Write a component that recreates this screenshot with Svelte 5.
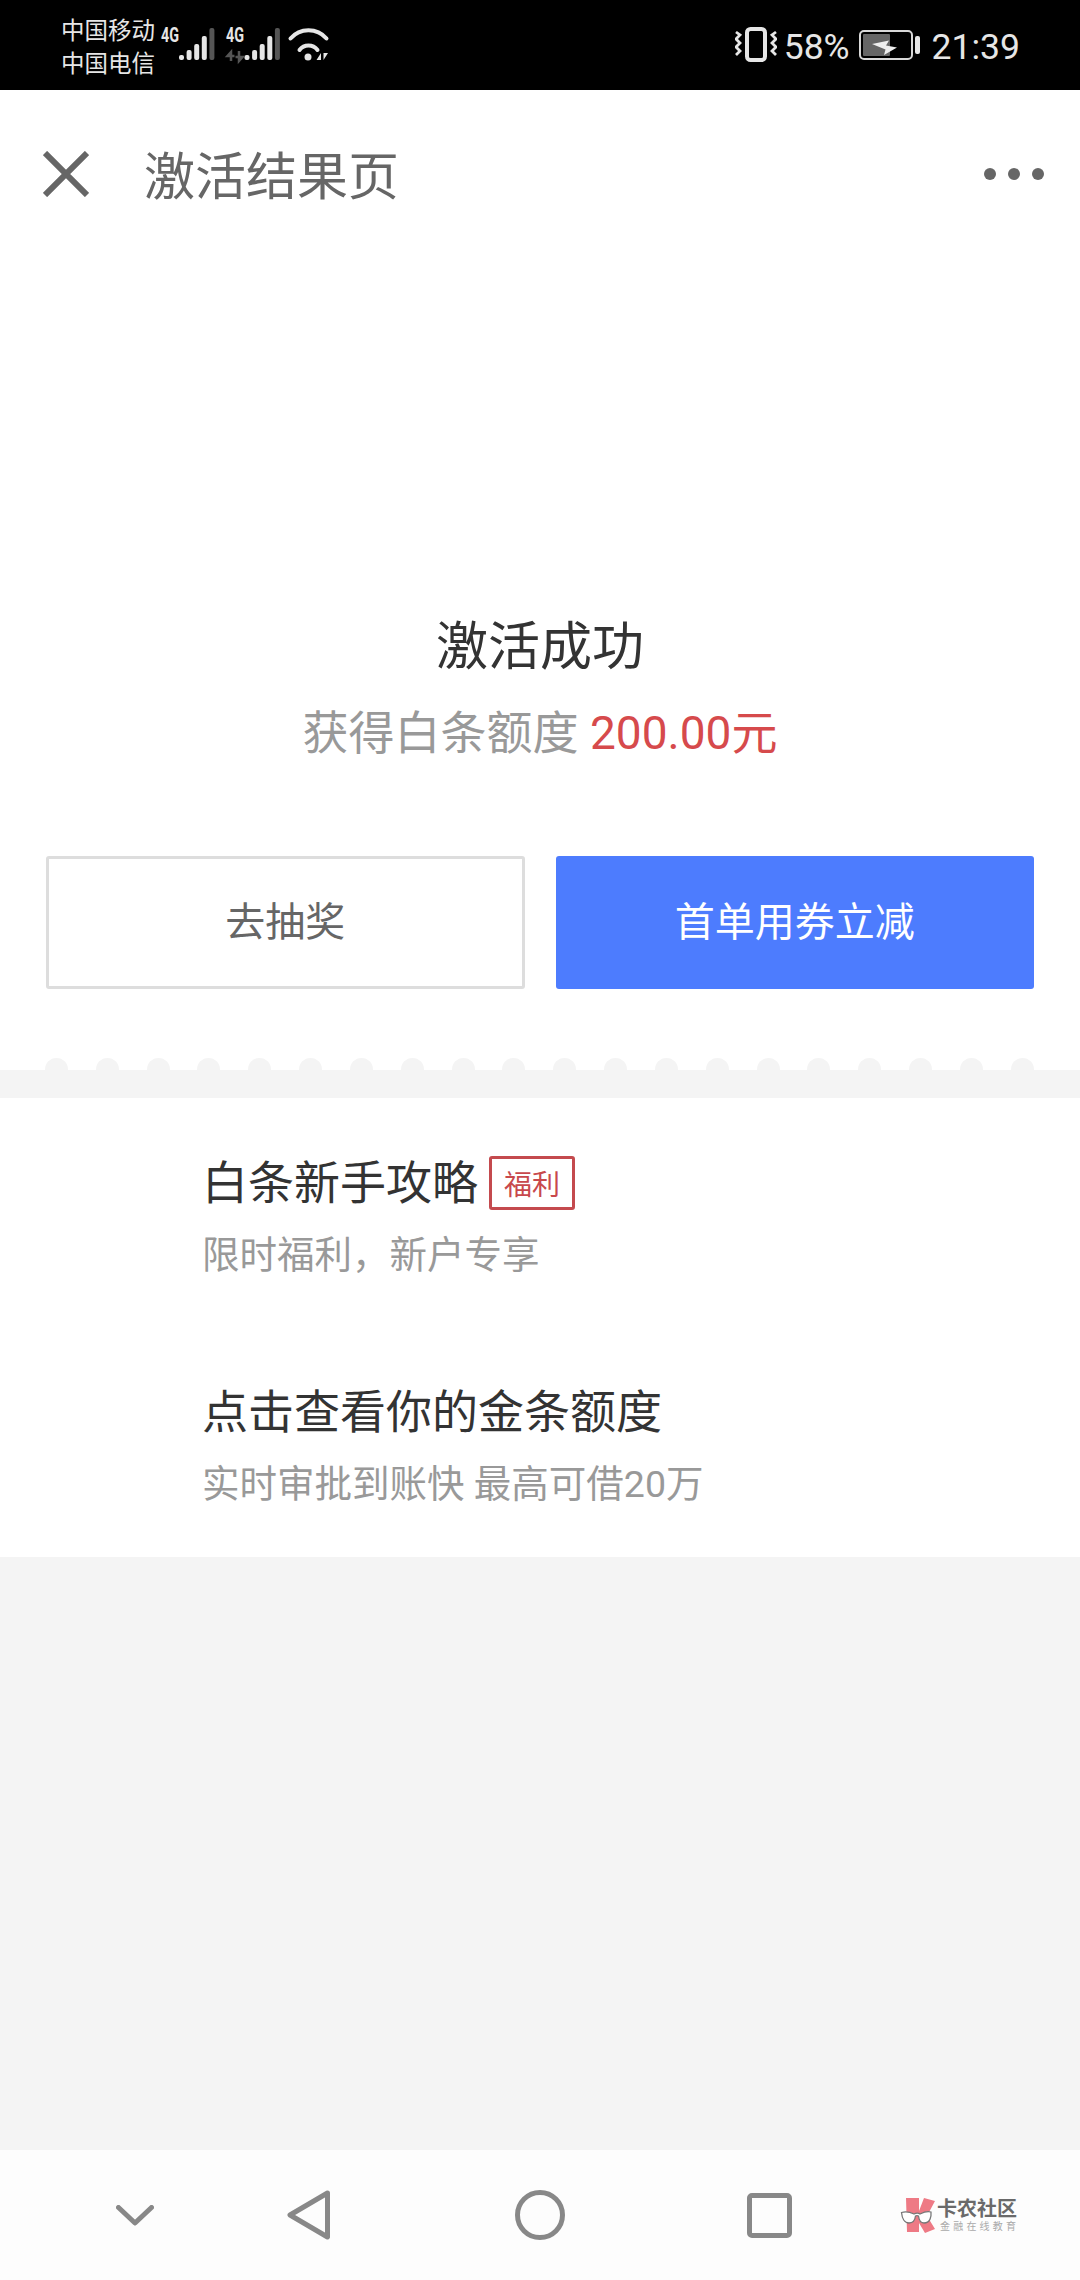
<script>
  // tutorial rows under the activation result
  const guides = [
    { title: "白条新手攻略", tag: "福利", desc: "限时福利，新户专享" },
    { title: "点击查看你的金条额度", tag: "", desc: "实时审批到账快 最高可借20万" },
  ];

  // the torn edge above the grey band
  const scallops = Array.from({ length: 20 }, (_, i) => i);

  // signal bars: distance from the left of the icon and top of the bar
  const bars = [
    { x: 0, top: 55, dim: false },
    { x: 7.6, top: 50, dim: false },
    { x: 15.2, top: 44, dim: false },
    { x: 22.8, top: 36, dim: false },
    { x: 30.4, top: 28, dim: true },
  ];
</script>

<div class="page">
  <div class="status">
    <div class="carriers">
      <span>中国移动</span>
      <span>中国电信</span>
    </div>
    <svg class="net" width="172" height="90" viewBox="160 0 172 90">
      <text x="162" y="42" textLength="18" lengthAdjust="spacingAndGlyphs" class="net-label">4G</text>
      <text x="227" y="42" textLength="18" lengthAdjust="spacingAndGlyphs" class="net-label">4G</text>
      {#each bars as bar}
        <rect x={180 + bar.x} y={bar.top} width="5" height={60 - bar.top} rx="2" fill={bar.dim ? "#555" : "#e6e6e6"} />
        <rect x={245.5 + bar.x} y={bar.top} width="5" height={60 - bar.top} rx="2" fill={bar.dim ? "#555" : "#e6e6e6"} />
      {/each}
      <!-- data arrows of the second sim -->
      <path d="M232 61V52l-3.500 4h7M240 51v10l3.500-4h-7" fill="none" stroke="#555" stroke-width="2.500" />
      <!-- wifi -->
      <path d="M291.500 38.500C301 27.500 318 27.500 327.500 38.500M300.500 50C305 44 314 44 318.500 50" fill="none" stroke="#e6e6e6" stroke-width="4" stroke-linecap="round" />
      <circle cx="309" cy="57" r="3.500" fill="#e6e6e6" />
      <path d="M322 53v7h-4.500zM324.500 53h4.500l-4.500 7z" fill="#e6e6e6" />
    </svg>

    <div class="status-right">
      <svg class="vibrate" width="42" height="36" viewBox="0 0 42 36">
        <rect x="12" y="2" width="18" height="31" rx="3.500" fill="none" stroke="#e6e6e6" stroke-width="4" />
        <path d="M1 5l4 3-4 4 4 4-4 4 4 4-4 4M41 5l-4 3 4 4-4 4 4 4-4 4 4 4" fill="none" stroke="#e6e6e6" stroke-width="2.800" />
      </svg>
      <span class="percent">58%</span>
      <svg class="battery" width="61" height="30" viewBox="0 0 61 30">
        <rect x="1" y="1" width="52" height="28" rx="4" fill="none" stroke="#d8d8d8" stroke-width="2" />
        <rect x="4" y="4" width="27" height="22" rx="1" fill="#666" />
        <path d="M13 14L30 10.500L27 15.500L38 17.500L25 25L26.500 19.500Z" fill="#eee" />
        <rect x="56" y="6" width="5" height="18" rx="2" fill="#e6e6e6" />
      </svg>
      <span class="time">21:39</span>
    </div>
  </div>

  <div class="header">
    <svg class="close" width="46" height="46" viewBox="0 0 46 46">
      <path d="M2 2L44 44M44 2L2 44" stroke="#666" stroke-width="6" />
    </svg>
    <span class="header-title">激活结果页</span>
    <div class="more">
      <i></i><i></i><i></i>
    </div>
  </div>

  <div class="result">
    <h1>激活成功</h1>
    <p class="quota">获得白条额度 <span>200.00元</span></p>
    <div class="actions">
      <button class="ghost">去抽奖</button>
      <button class="primary">首单用券立减</button>
    </div>
    <div class="scallops">
      {#each scallops as s (s)}
        <i></i>
      {/each}
    </div>
  </div>

  <div class="band"></div>

  <div class="guides">
    {#each guides as guide}
      <div class="guide">
        <div class="guide-title">
          {guide.title}
          {#if guide.tag}
            <span class="tag">{guide.tag}</span>
          {/if}
        </div>
        <div class="guide-desc">{guide.desc}</div>
      </div>
    {/each}
  </div>

  <div class="spacer"></div>

  <div class="nav">
    <svg class="chevron" width="38" height="21" viewBox="0 0 38 21">
      <path d="M2.500 2.500L19 18L35.500 2.500" fill="none" stroke="#888" stroke-width="5" stroke-linecap="round" stroke-linejoin="round" />
    </svg>
    <svg class="back" width="44" height="50" viewBox="0 0 44 50">
      <path d="M40.500 3L3 25L40.500 47Z" fill="none" stroke="#888" stroke-width="5" stroke-linejoin="round" />
    </svg>
    <svg class="home" width="50" height="50" viewBox="0 0 50 50">
      <circle cx="25" cy="25" r="22.500" fill="none" stroke="#888" stroke-width="5" />
    </svg>
    <div class="recent"></div>
    <div class="logo">
      <svg width="36" height="36" viewBox="0 0 36 36">
        <path d="M6 1h13v13l5-13 11 3-8 15 8 13-10 4-6-10v9H7z" fill="#ee7a85" />
        <path d="M1.500 15.500C6 14 10 15 14 17c3-1.500 4-1.500 6 0 4-2 8-3 11-2 .5 5-1 11-7 11-4 0-5-3-5.500-7-1-.5-2-.5-3 0C15 23 13 26 9 26c-4.500 0-7-5-7.500-10.500z" fill="#fff" stroke="#777" stroke-width="1.300" />
      </svg>
      <div class="logo-text">
        <span class="logo-name">卡农社区</span>
        <span class="logo-sub">金融在线教育</span>
      </div>
    </div>
  </div>
</div>

<style>
  :global(body) {
    margin: 0;
  }

  .page {
    width: 1080px;
    height: 2280px;
    display: flex;
    flex-direction: column;
    background: #f4f4f4;
    font-family: Roboto, "Noto Sans CJK SC", sans-serif;
  }

  .status {
    height: 90px;
    flex: none;
    display: flex;
    align-items: center;
    padding: 0 60px 0 61px;
    background: #000;
    color: #e6e6e6;
  }

  .carriers {
    display: flex;
    flex-direction: column;
    font-size: 23.500px;
    line-height: 33px;
    margin-top: 5px;
  }

  .net {
    margin-left: 4px;
  }

  .net-label {
    fill: #e6e6e6;
    font-family: Roboto, sans-serif;
    font-size: 20px;
    font-weight: 700;
  }

  .status-right {
    margin-left: auto;
    display: flex;
    align-items: center;
    font-size: 35.500px;
  }

  .percent {
    margin-left: 7px;
    padding-top: 3px;
  }

  .battery {
    margin-left: 9px;
  }

  .time {
    margin-left: 12px;
    padding-top: 3px;
  }

  .header {
    height: 170px;
    flex: none;
    box-sizing: border-box;
    display: flex;
    align-items: center;
    padding: 0 36px 2px 43px;
    background: #fff;
    color: #666;
  }

  .header-title {
    margin: 0 0 3px 55px;
    font-size: 51px;
  }

  .more {
    margin-left: auto;
    display: flex;
    gap: 12px;
  }

  .more i {
    width: 12px;
    height: 12px;
    border-radius: 50%;
    background: #666;
  }

  .result {
    flex: none;
    display: flex;
    flex-direction: column;
    align-items: center;
    background: #fff;
    padding-top: 353px;
  }

  h1 {
    margin: 0;
    font-size: 52px;
    font-weight: 400;
    line-height: 70px;
    color: #333;
  }

  .quota {
    margin: 20px 0 0;
    font-size: 46px;
    line-height: 60px;
    color: #999;
  }

  .quota span {
    color: #d64a4c;
  }

  .actions {
    margin-top: 93px;
    width: 100%;
    box-sizing: border-box;
    padding: 0 46px;
    display: grid;
    grid-template-columns: 1fr 1fr;
    gap: 31px;
  }

  button {
    height: 133px;
    box-sizing: border-box;
    border-radius: 3px;
    font-family: inherit;
    font-size: 40px;
    padding: 0 0 8px;
  }

  .ghost {
    background: #fff;
    border: 3px solid #ddd;
    color: #666;
  }

  .primary {
    background: #4d7cfe;
    border: 0;
    color: #fff;
  }

  .scallops {
    margin-top: 69px;
    width: 100%;
    box-sizing: border-box;
    padding: 0 46px 0 45px;
    display: flex;
    justify-content: space-between;
  }

  .scallops i {
    width: 23px;
    height: 12px;
    border-radius: 12px 12px 0 0;
    background: #f4f4f4;
  }

  .band {
    height: 28px;
    flex: none;
  }

  .guides {
    flex: none;
    background: #fff;
    padding: 51px 0 48px 202px;
    display: flex;
    flex-direction: column;
    gap: 98px;
  }

  .guide-title {
    display: flex;
    align-items: center;
    height: 60px;
    font-size: 46px;
    color: #333;
  }

  .tag {
    margin: 8px 0 0 11px;
    width: 86px;
    height: 54px;
    box-sizing: border-box;
    border: 3px solid #c44a4e;
    border-radius: 3px;
    display: flex;
    align-items: center;
    justify-content: center;
    font-size: 28px;
    color: #c8484c;
  }

  .guide-desc {
    margin-top: 21px;
    font-size: 37.500px;
    line-height: 50px;
    color: #999;
  }

  .spacer {
    flex: 1;
  }

  .nav {
    height: 130px;
    flex: none;
    display: flex;
    align-items: center;
    background: #fdfdfd;
    padding-left: 116px;
  }

  .back {
    margin-left: 133px;
  }

  .home {
    margin-left: 184px;
  }

  .recent {
    margin-left: 182px;
    width: 45px;
    height: 45px;
    box-sizing: border-box;
    border: 5px solid #888;
    border-radius: 5px;
  }

  .logo {
    margin-left: 108px;
    display: flex;
    align-items: center;
  }

  .logo-text {
    margin-left: 1px;
    display: flex;
    flex-direction: column;
  }

  .logo-name {
    font-size: 20px;
    line-height: 22px;
    font-weight: 700;
    color: #6a6a6a;
  }

  .logo-sub {
    font-size: 10px;
    line-height: 13px;
    letter-spacing: 3.200px;
    margin-left: 3px;
    color: #aaa;
  }
</style>
